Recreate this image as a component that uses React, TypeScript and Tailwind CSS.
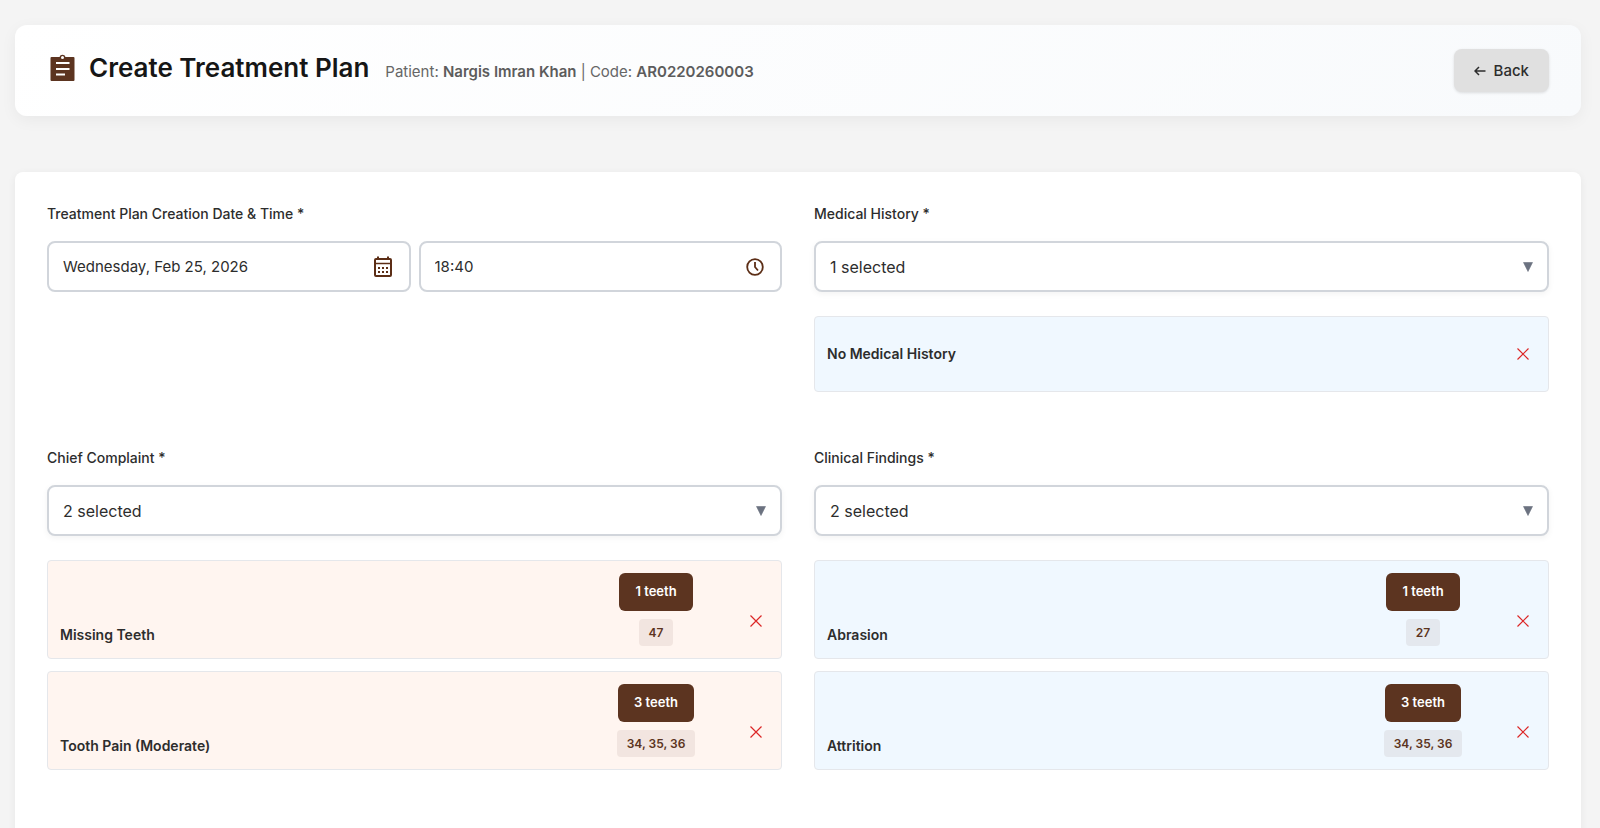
import type { ReactNode } from "react";
import { clsx } from "clsx";

type Finding = { name: string; teeth?: string[] };
type Tone = "peach" | "blue";

const complaints: Finding[] = [
  { name: "Missing Teeth", teeth: ["47"] },
  { name: "Tooth Pain (Moderate)", teeth: ["34", "35", "36"] },
];

const findings: Finding[] = [
  { name: "Abrasion", teeth: ["27"] },
  { name: "Attrition", teeth: ["34", "35", "36"] },
];

export default function App() {
  return (
    <div className="min-h-screen bg-[#f4f4f4] pt-[25px] pr-[19px] pl-[15px] font-['Inter',sans-serif] text-[#2d2d2d]">
      <header className="flex items-start justify-between rounded-xl bg-linear-135 from-white to-[#f8fafc] px-8 py-6 shadow-[0_4px_16px_rgba(0,0,0,0.05)]">
        <div className="flex items-center gap-3">
          <ClipboardIcon />
          <div className="flex items-baseline gap-4">
            <h1 className="text-[26px] leading-[38px] font-semibold text-[#161616]">Create Treatment Plan</h1>
            <p className="text-[15px] text-[#666]">
              Patient: <strong className="font-semibold text-[#5c5c5c]">Nargis Imran Khan</strong> | Code:{" "}
              <strong className="font-semibold text-[#5c5c5c]">AR0220260003</strong>
            </p>
          </div>
        </div>
        <button
          type="button"
          className="flex h-[43px] items-center gap-2 rounded-lg bg-[#e0e0e0] px-5 text-[15px] leading-6 font-medium shadow-[0_1px_3px_rgba(0,0,0,0.12)]"
        >
          <ArrowIcon />
          Back
        </button>
      </header>

      <main className="mt-14 grid min-h-screen grid-cols-2 content-start gap-x-8 gap-y-14 rounded-lg bg-white p-8 shadow-[0_2px_8px_rgba(0,0,0,0.06)]">
        <section>
          <Label htmlFor="plan-date">Treatment Plan Creation Date &amp; Time *</Label>
          <div className="flex gap-2">
            <PickerField id="plan-date" label="Date" value="Wednesday, Feb 25, 2026" icon={<CalendarIcon />} />
            <PickerField id="plan-time" label="Time" value="18:40" icon={<ClockIcon />} />
          </div>
        </section>
        <Picker id="history" label="Medical History *" items={[{ name: "No Medical History" }]} tone="blue" />
        <Picker id="complaint" label="Chief Complaint *" items={complaints} tone="peach" />
        <Picker id="findings" label="Clinical Findings *" items={findings} tone="blue" />
      </main>
    </div>
  );
}

function Label({ htmlFor, children }: { htmlFor: string; children: ReactNode }) {
  return (
    <label htmlFor={htmlFor} className="mb-[17px] block text-sm font-medium">
      {children}
    </label>
  );
}

function PickerField({ id, label, value, icon }: { id: string; label: string; value: string; icon: ReactNode }) {
  return (
    <div className="flex h-[51px] min-w-0 flex-1 items-center rounded-lg border-2 border-[#d1d5db] bg-white pr-4 pl-3.5">
      <input
        id={id}
        aria-label={label}
        defaultValue={value}
        className="h-6 min-w-0 flex-1 text-[15px] leading-6 outline-none"
      />
      <button type="button" aria-label={`Choose ${label.toLowerCase()}`}>
        {icon}
      </button>
    </div>
  );
}

function Picker({ id, label, items, tone }: { id: string; label: string; items: Finding[]; tone: Tone }) {
  return (
    <section>
      <Label htmlFor={id}>{label}</Label>
      <button
        id={id}
        type="button"
        aria-haspopup="listbox"
        className="flex h-[51px] w-full items-center justify-between rounded-lg border-2 border-[#d1d5db] bg-white px-3.5 text-base shadow-[0_2px_6px_rgba(0,0,0,0.05)]"
      >
        {items.length} selected
        <svg width="10" height="10" viewBox="0 0 10 10" className="fill-[#6b7280]" aria-hidden="true">
          <path d="M.5.5h9L5 9.500z" stroke="#6b7280" strokeWidth=".6" />
        </svg>
      </button>
      <ul className="mt-6 space-y-3">
        {items.map((item) => (
          <FindingCard key={item.name} item={item} tone={tone} />
        ))}
      </ul>
    </section>
  );
}

function FindingCard({ item, tone }: { item: Finding; tone: Tone }) {
  return (
    <li
      className={clsx(
        "grid grid-cols-[1fr_150px_26px] items-end gap-3 rounded border border-[#e5e7eb] p-3",
        tone === "peach" ? "bg-[#fff5f0]" : "bg-[#f0f8ff]",
      )}
    >
      <span className={clsx("text-sm leading-[22px] font-semibold", !item.teeth && "self-center")}>{item.name}</span>
      <div className="flex flex-col items-center gap-2">
        {item.teeth && (
          <>
            <button type="button" className="h-[38px] rounded-md bg-[#5c3420] px-4 text-[13px] font-semibold text-white">
              {item.teeth.length} teeth
            </button>
            <span className="rounded bg-[#5c3420]/8 px-2.5 text-xs leading-[27px] font-semibold text-[#5c3420]">
              {item.teeth.join(", ")}
            </span>
          </>
        )}
      </div>
      <button type="button" aria-label={`Remove ${item.name}`} className="flex h-[50px] items-center justify-center">
        <svg width="12" height="12" viewBox="0 0 12 12" className="stroke-[#dc2626]" strokeWidth="1.2" aria-hidden="true">
          <path d="M.5.5l11 11M11.5.5l-11 11" />
        </svg>
      </button>
    </li>
  );
}

function ClipboardIcon() {
  return (
    <svg width="30" height="30" viewBox="0 0 30 30" aria-hidden="true">
      <path
        fill="#5c3420"
        fillRule="evenodd"
        d="M4.500 4h8a3.100 3.100 0 0 1 6 0h8a1 1 0 0 1 1 1v22a1 1 0 0 1-1 1h-22a1 1 0 0 1-1-1V5a1 1 0 0 1 1-1zm11-1a1.500 1.500 0 1 0 0 3 1.500 1.500 0 0 0 0-3zM9 9v2h13.500V9zm0 6v2h13.500v-2zm0 5.500v2h9v-2z"
      />
    </svg>
  );
}

function ArrowIcon() {
  return (
    <svg width="12" height="10" viewBox="0 0 12 10" fill="none" stroke="currentColor" strokeWidth="1.5" aria-hidden="true">
      <path d="M11.500 5H1.200M5 1L1 5l4 4" />
    </svg>
  );
}

function CalendarIcon() {
  return (
    <svg width="20" height="22" viewBox="0 0 20 22" fill="none" stroke="#5c2e16" aria-hidden="true">
      <rect x="2" y="3" width="16" height="17" rx="1" strokeWidth="2" />
      <path d="M2 7.500h16" strokeWidth="1.500" />
      <path d="M5 .5v2.500M15 .5v2.500" strokeWidth="2" />
      <path d="M5 12h2M9 12h2M13 12h2M5 16h2M9 16h2M13 16h2" strokeWidth="2" />
    </svg>
  );
}

function ClockIcon() {
  return (
    <svg width="18" height="18" viewBox="0 0 18 18" fill="none" stroke="#5c2e16" strokeWidth="1.800" aria-hidden="true">
      <circle cx="9" cy="9" r="7.800" />
      <path d="M9 4v5l3 3.500" />
    </svg>
  );
}
